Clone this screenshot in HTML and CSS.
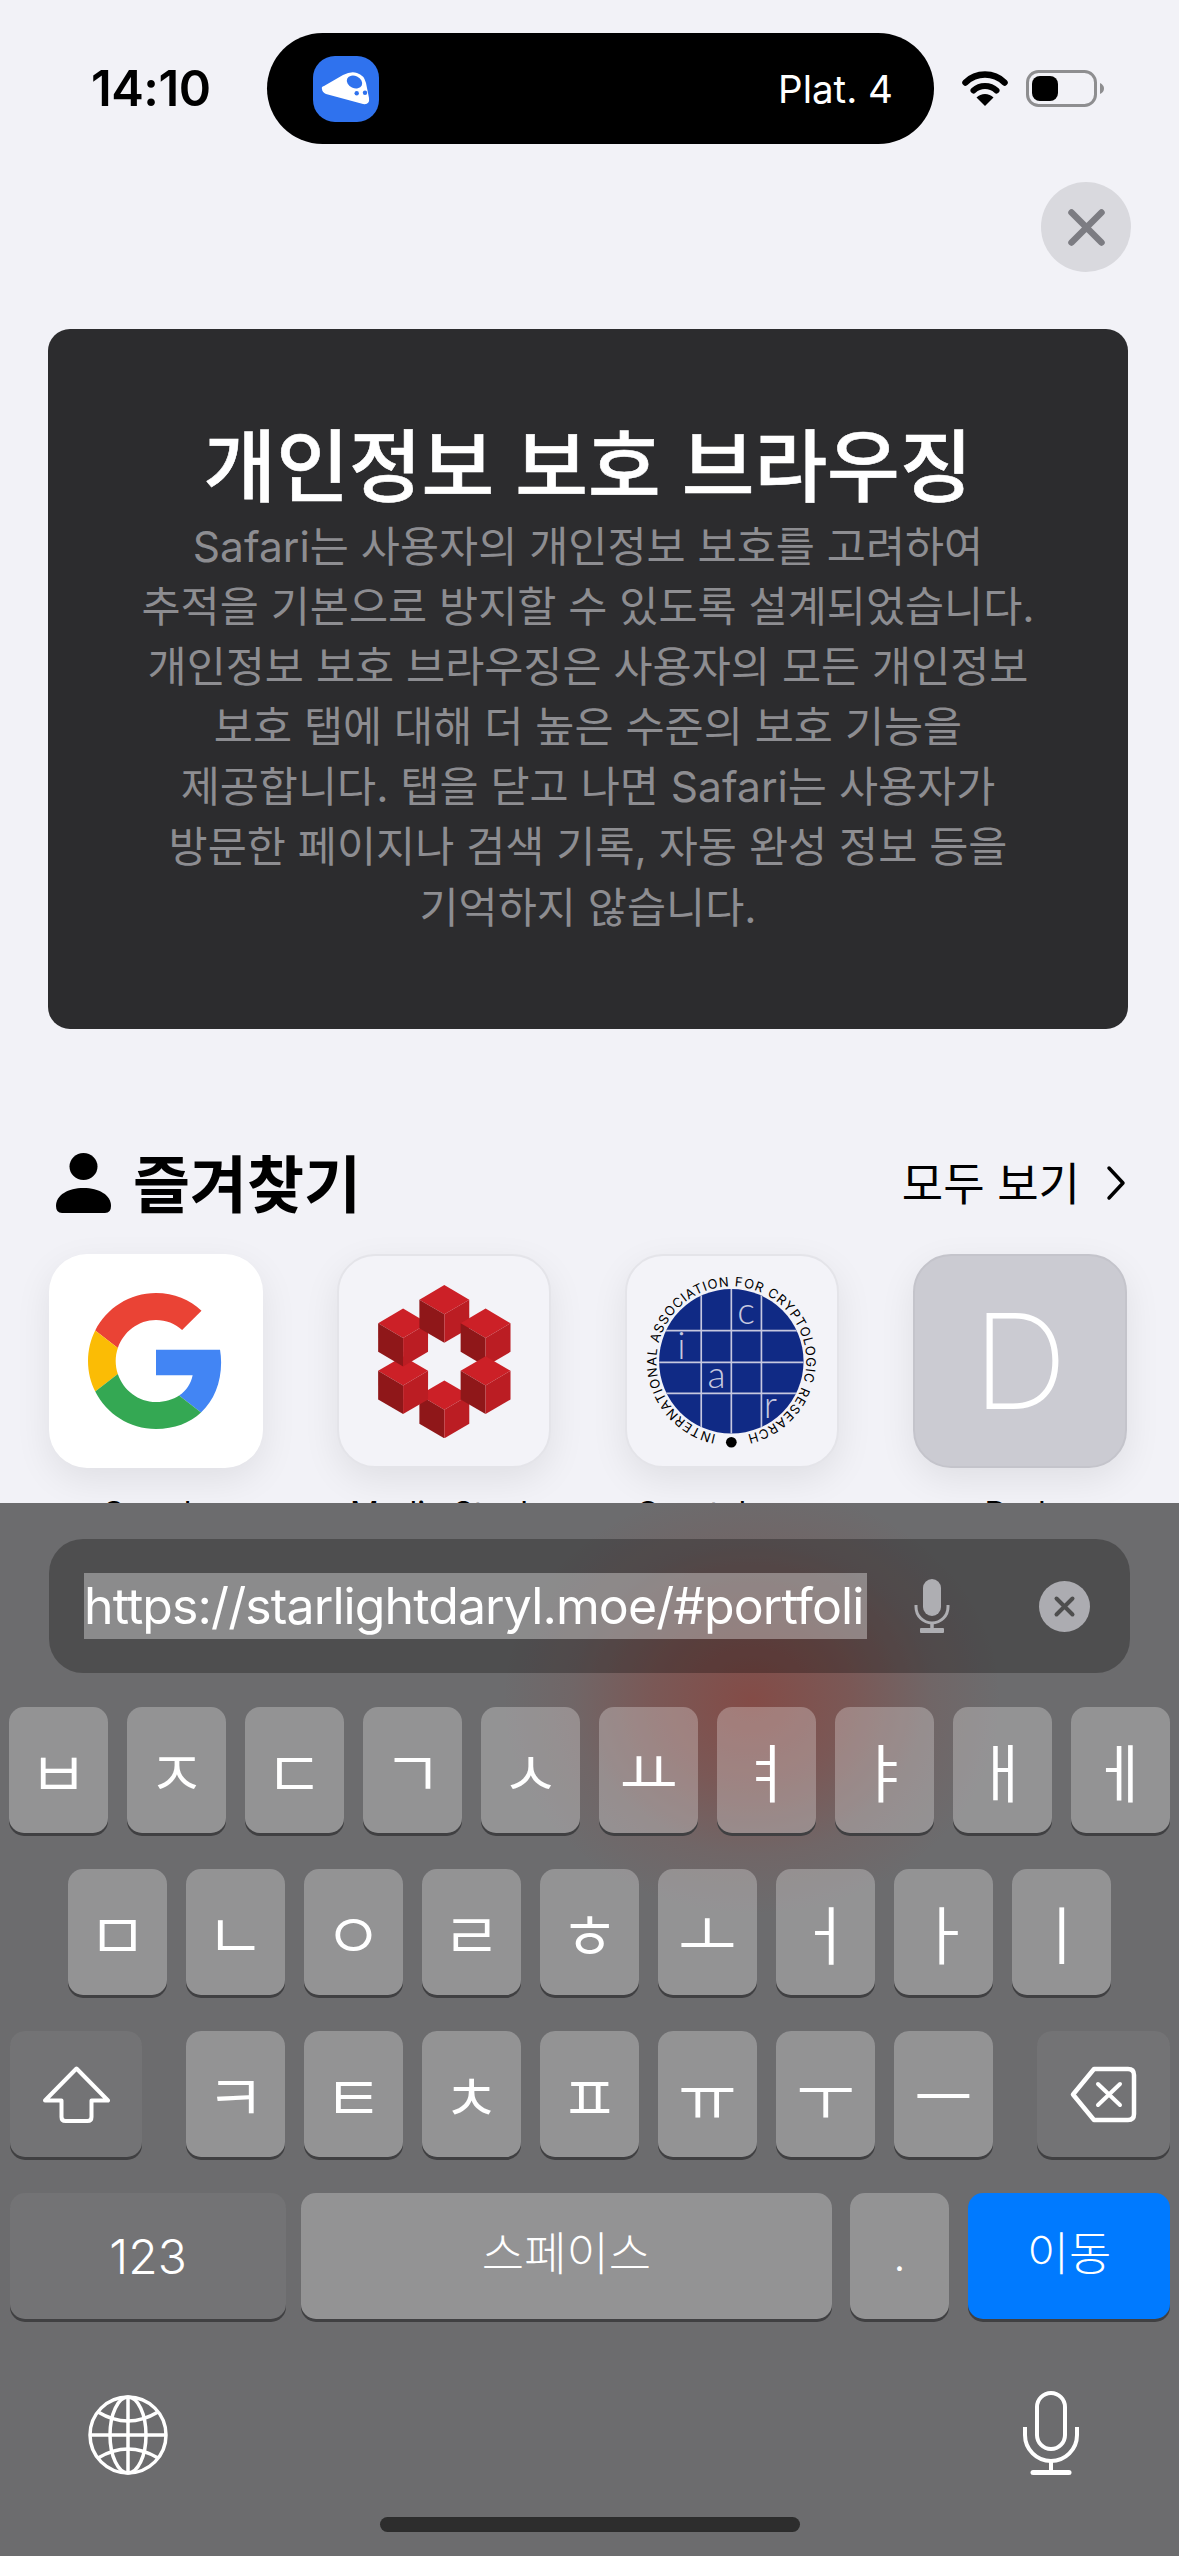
FILE: index.html
```html
<!DOCTYPE html>
<html lang="ko">
<head>
    <meta charset="UTF-8">
    <meta name="viewport" content="width=device-width, initial-scale=1.0">
    <title>개인정보 보호 브라우징</title>
    <link rel="stylesheet" href="styles.css">
</head>
<body>
    <div class="page">
        <div class="status-bar">
            <span class="time">14:10</span>
            <div class="island">
                <svg class="app-icon" viewBox="0 0 66 66">
                    <rect width="66" height="66" rx="22" fill="#2f72ee"/>
                    <path d="M9 33 Q8 31 11 30 L30 19 Q38 15 44 17 Q51 19 53 27 L56 42 Q57 49 50 48 L13 38 Q9 36 9 33 Z" fill="#fff"/>
                    <ellipse cx="41.500" cy="26" rx="8" ry="6" transform="rotate(25 41.500 26)" fill="#2f72ee"/>
                    <circle cx="43.700" cy="37.300" r="2.200" fill="#2f72ee"/>
                    <circle cx="52" cy="36.700" r="2.200" fill="#2f72ee"/>
                </svg>
                <span class="platform">Plat. 4</span>
            </div>
            <svg class="wifi" viewBox="0 0 46 35">
                <path d="M3.500 11.500 A28 28 0 0 1 42.500 11.500" fill="none" stroke="#000" stroke-width="6.500" stroke-linecap="round"/>
                <path d="M11.500 19.500 A17 17 0 0 1 34.500 19.500" fill="none" stroke="#000" stroke-width="6" stroke-linecap="round"/>
                <path d="M23 35 L14.500 26.500 A12 12 0 0 1 31.500 26.500 Z" fill="#000"/>
            </svg>
            <svg class="battery" viewBox="0 0 78 37">
                <rect x="1.500" y="1.500" width="68" height="34" rx="11" fill="none" stroke="#8e8e90" stroke-width="3"/>
                <rect x="6" y="6" width="26" height="25" rx="8" fill="#000"/>
                <path d="M74 13 Q78 15 78 18.500 Q78 22 74 24 Z" fill="#8e8e90"/>
            </svg>
        </div>

        <div class="close-row">
            <div class="close-button">
                <svg viewBox="0 0 37 37" width="37" height="37">
                    <path d="M3.500 3.500 L33.500 33.500 M33.500 3.500 L3.500 33.500" stroke="#7c7c82" stroke-width="6.500" stroke-linecap="round"/>
                </svg>
            </div>
        </div>

        <div class="private-card">
            <h1>개인정보 보호 브라우징</h1>
            <p>Safari는 사용자의 개인정보 보호를 고려하여<br>
            추적을 기본으로 방지할 수 있도록 설계되었습니다.<br>
            개인정보 보호 브라우징은 사용자의 모든 개인정보<br>
            보호 탭에 대해 더 높은 수준의 보호 기능을<br>
            제공합니다. 탭을 닫고 나면 Safari는 사용자가<br>
            방문한 페이지나 검색 기록, 자동 완성 정보 등을<br>
            기억하지 않습니다.</p>
        </div>

        <div class="section-header">
            <div class="section-title">
                <svg class="person" viewBox="0 0 55 60">
                    <ellipse cx="27.500" cy="13.500" rx="14" ry="13.500"/>
                    <path d="M0 53 C0 42 12 35 27.500 35 C43 35 55 42 55 53 Q55 60 49 60 L6 60 Q0 60 0 53 Z"/>
                </svg>
                <h2>즐겨찾기</h2>
            </div>
            <div class="see-all">
                <span>모두 보기</span>
                <svg viewBox="0 0 20 36" width="20" height="36">
                    <path d="M3 3 L17 18 L3 33" fill="none" stroke="#000" stroke-width="3.500" stroke-linecap="round" stroke-linejoin="round"/>
                </svg>
            </div>
        </div>

        <div class="favorites">
            <div class="favorite">
                <div class="tile tile-white">
                    <svg viewBox="0 0 48 48" width="136" height="136">
                        <path fill="#EA4335" d="M24 9.5c3.54 0 6.71 1.22 9.21 3.6l6.85-6.85C35.9 2.38 30.47 0 24 0 14.62 0 6.51 5.38 2.56 13.22l7.98 6.19C12.43 13.72 17.74 9.5 24 9.5z"/>
                        <path fill="#4285F4" d="M46.98 24.55c0-1.57-.15-3.09-.38-4.55H24v9.02h12.94c-.58 2.96-2.26 5.48-4.78 7.18l7.73 6c4.51-4.18 7.09-10.36 7.09-17.65z"/>
                        <path fill="#FBBC05" d="M10.53 28.59c-.48-1.45-.76-2.99-.76-4.59s.27-3.14.76-4.59l-7.98-6.19C.92 16.46 0 20.12 0 24c0 3.88.92 7.54 2.56 10.78l7.97-6.19z"/>
                        <path fill="#34A853" d="M24 48c6.48 0 11.93-2.13 15.89-5.81l-7.73-6c-2.15 1.45-4.92 2.3-8.16 2.3-6.26 0-11.57-4.22-13.47-9.91l-7.98 6.19C6.51 42.62 14.62 48 24 48z"/>
                    </svg>
                </div>
                <span class="label">Google</span>
            </div>
            <div class="favorite">
                <div class="tile tile-light">
                    <svg viewBox="232 158 399 460" width="133" height="153">
                        <defs>
                            <g id="cube">
                                <path d="M0 -87 L75 -43 L0 1 L-75 -43 Z" fill="#cc2027"/>
                                <path d="M-75 -43 L0 1 L0 87 L-75 43 Z" fill="#8f1719"/>
                                <path d="M75 -43 L0 1 L0 87 L75 43 Z" fill="#bb1d23"/>
                            </g>
                        </defs>
                        <use href="#cube" x="431" y="532"/>
                        <use href="#cube" x="307" y="459"/>
                        <use href="#cube" x="307" y="316"/>
                        <use href="#cube" x="431" y="245"/>
                        <use href="#cube" x="555" y="316"/>
                        <use href="#cube" x="555" y="459"/>
                    </svg>
                </div>
                <span class="label">Marlin Stack</span>
            </div>
            <div class="favorite">
                <div class="tile tile-light">
                    <svg class="iacr" viewBox="78 72 640 640" width="214" height="214">
                        <defs>
                            <clipPath id="seal"><circle cx="396" cy="393" r="216"/></clipPath>
                        </defs>
                        <circle cx="396" cy="393" r="216" fill="#102a85"/>
                        <g clip-path="url(#seal)" stroke="#c6c8df" stroke-width="5">
                            <path d="M306 170 V620 M396 170 V620 M486 170 V620 M170 301 H620 M170 396 H620 M170 489 H620" fill="none"/>
                        </g>
                        <g class="iacr-letters">
                            <text x="440" y="282">c</text>
                            <text x="247" y="385">i</text>
                            <text x="352" y="472">a</text>
                            <text x="513" y="562">r</text>
                        </g>
                        <path id="seal-ring" d="M350 612 A224 224 0 1 1 442 612" fill="none"/>
                        <text class="iacr-ring"><textPath href="#seal-ring" textLength="1312">INTERNATIONAL ASSOCIATION FOR CRYPTOLOGIC RESEARCH</textPath></text>
                        <circle cx="396" cy="635" r="16" fill="#000"/>
                    </svg>
                </div>
                <span class="label">Cryptology…</span>
            </div>
            <div class="favorite">
                <div class="tile tile-letter">D</div>
                <span class="label">Dark</span>
            </div>
        </div>
    </div>

    <div class="keyboard">
        <div class="url-bar">
            <span class="url">https://starlightdaryl.moe/#portfoli</span>
            <svg class="url-mic" viewBox="0 0 36 54">
                <rect x="9" y="0" width="18" height="37" rx="9" fill="#aeaeb2"/>
                <path d="M2 26 V28 A16 16 0 0 0 34 28 V26" fill="none" stroke="#aeaeb2" stroke-width="3"/>
                <path d="M18 44 V51" stroke="#aeaeb2" stroke-width="3.500"/>
                <rect x="6" y="49" width="24" height="5" rx="1" fill="#aeaeb2"/>
            </svg>
            <svg class="url-clear" viewBox="0 0 51 51">
                <circle cx="25.500" cy="25.500" r="25.500" fill="#acacb1"/>
                <path d="M17.500 17.500 L33.500 33.500 M33.500 17.500 L17.500 33.500" stroke="#4e4e4e" stroke-width="4" stroke-linecap="round"/>
            </svg>
        </div>

        <div class="keys">
            <div class="row">
                <div class="key">ㅂ</div>
                <div class="key">ㅈ</div>
                <div class="key">ㄷ</div>
                <div class="key">ㄱ</div>
                <div class="key">ㅅ</div>
                <div class="key">ㅛ</div>
                <div class="key">ㅕ</div>
                <div class="key">ㅑ</div>
                <div class="key">ㅐ</div>
                <div class="key">ㅔ</div>
            </div>
            <div class="row">
                <div class="key">ㅁ</div>
                <div class="key">ㄴ</div>
                <div class="key">ㅇ</div>
                <div class="key">ㄹ</div>
                <div class="key">ㅎ</div>
                <div class="key">ㅗ</div>
                <div class="key">ㅓ</div>
                <div class="key">ㅏ</div>
                <div class="key">ㅣ</div>
            </div>
            <div class="row row-split">
                <div class="key key-dark key-shift">
                    <svg viewBox="0 0 67 57" width="67" height="57">
                        <path d="M33.500 2.500 L65 34.500 H48.500 V51 Q48.500 55 44.500 55 H22.500 Q18.500 55 18.500 51 V34.500 H2 Z" fill="none" stroke="#fff" stroke-width="4" stroke-linejoin="round"/>
                    </svg>
                </div>
                <div class="row">
                    <div class="key">ㅋ</div>
                    <div class="key">ㅌ</div>
                    <div class="key">ㅊ</div>
                    <div class="key">ㅍ</div>
                    <div class="key">ㅠ</div>
                    <div class="key">ㅜ</div>
                    <div class="key">ㅡ</div>
                </div>
                <div class="key key-dark key-delete">
                    <svg viewBox="0 0 67 57" width="67" height="57">
                        <path d="M24 3 H58 Q64 3 64 9 V48 Q64 54 58 54 H24 L3 28.500 Z" fill="none" stroke="#fff" stroke-width="4.500" stroke-linejoin="round"/>
                        <path d="M28 18 L50 39 M50 18 L28 39" stroke="#fff" stroke-width="4" stroke-linecap="round"/>
                    </svg>
                </div>
            </div>
            <div class="row row-bottom">
                <div class="key key-dark key-123">123</div>
                <div class="key key-space">스페이스</div>
                <div class="key key-dot">.</div>
                <div class="key key-go">이동</div>
            </div>
        </div>

        <div class="keyboard-footer">
            <svg viewBox="0 0 80 80" width="80" height="80" fill="none" stroke="#fff" stroke-width="3.500">
                <circle cx="40" cy="40" r="38"/>
                <ellipse cx="40" cy="40" rx="18" ry="38"/>
                <path d="M40 2 V78 M2 40 H78"/>
                <path d="M10 17 Q40 35 70 17 M10 63 Q40 45 70 63"/>
            </svg>
            <svg viewBox="0 0 56 84" width="56" height="84" fill="none" stroke="#fff" stroke-width="4">
                <rect x="14" y="2" width="28" height="56" rx="14"/>
                <path d="M2 36 V44 A26 26 0 0 0 54 44 V36"/>
                <path d="M28 70 V80"/>
                <path d="M10 81.500 H46" stroke-width="5" stroke-linecap="round"/>
            </svg>
        </div>
        <div class="home-indicator"></div>
    </div>
</body>
</html>
```

FILE: styles.css
```css
* {
    box-sizing: border-box;
}
html, body {
    margin: 0;
    padding: 0;
}
body {
    width: 1179px;
    height: 2556px;
    overflow: hidden;
    background-color: #f2f2f7;
    color: #000;
    font-family: Inter, "Noto Sans CJK KR", sans-serif;
}
svg {
    display: block;
    flex-shrink: 0;
}

/* top part, cut off by the keyboard */
.page {
    height: 1503px;
    padding-top: 33px;
    overflow: hidden;
}
.status-bar {
    display: flex;
    align-items: center;
    height: 111px;
    padding-left: 91px;
}
.time {
    width: 176px;
    font-size: 49px;
    font-weight: 600;
    letter-spacing: -0.5px;
}
.island {
    display: flex;
    align-items: center;
    justify-content: space-between;
    width: 667px;
    height: 111px;
    padding: 0 41px 0 46px;
    background-color: #000;
    border-radius: 56px;
}
.app-icon {
    width: 66px;
    height: 66px;
}
.platform {
    color: #fff;
    font-size: 38.500px;
}
.wifi {
    width: 46px;
    height: 35px;
    margin-left: 28px;
}
.battery {
    width: 78px;
    height: 37px;
    margin-left: 18px;
}
.close-row {
    display: flex;
    justify-content: flex-end;
    margin-top: 38px;
    padding-right: 48px;
}
.close-button {
    display: flex;
    align-items: center;
    justify-content: center;
    width: 90px;
    height: 90px;
    background-color: #d9d9de;
    border-radius: 50%;
}
.private-card {
    width: 1080px;
    height: 700px;
    margin: 57px 0 0 48px;
    padding-top: 94px;
    background-color: #2c2c2e;
    border-radius: 22px;
    text-align: center;
    white-space: nowrap;
}
.private-card h1 {
    margin: 0 0 6px;
    color: #fff;
    font-size: 79px;
    font-weight: 500;
    line-height: 88px;
    -webkit-text-stroke: 0.600px #fff;
}
.private-card p {
    margin: 0;
    color: #8d8d91;
    font-size: 42.500px;
    line-height: 60.100px;
}
.section-header {
    display: flex;
    align-items: center;
    justify-content: space-between;
    height: 60px;
    margin-top: 124px;
    padding: 0 53px 0 56px;
}
.section-title {
    display: flex;
    align-items: center;
    gap: 22px;
}
.person {
    width: 55px;
    height: 60px;
}
.section-title h2 {
    margin: 0 0 5px;
    font-size: 62px;
    font-weight: 700;
}
.see-all {
    display: flex;
    align-items: center;
    gap: 26px;
    font-size: 45px;
}
.see-all span {
    margin-bottom: 4px;
}
.favorites {
    display: flex;
    gap: 74px;
    margin-top: 41px;
    padding-left: 49px;
}
.favorite {
    display: flex;
    flex-direction: column;
    align-items: center;
    width: 214px;
}
.tile {
    display: flex;
    align-items: center;
    justify-content: center;
    width: 214px;
    height: 214px;
    border-radius: 38px;
    box-shadow: 0 12px 36px rgba(0, 0, 0, 0.08);
}
.tile-white {
    background-color: #fff;
}
.tile-light {
    background-color: #f3f3f8;
    border: 2px solid #e4e4e9;
}
.iacr {
    margin: -2px;
}
.iacr-letters text {
    fill: #c6c8df;
    font-family: Lato, sans-serif;
    font-size: 112px;
    font-weight: 300;
    text-anchor: middle;
}
.iacr-ring {
    font-family: Inter, sans-serif;
    font-size: 39px;
}
.tile-letter {
    background-color: #cbcbd2;
    border: 2px solid #c4c4cb;
    color: #fff;
    font-size: 132px;
    font-weight: 250;
}
.label {
    margin-top: 26px;
    font-size: 32px;
    line-height: 40px;
    white-space: nowrap;
}

/* keyboard */
.keyboard {
    height: 1053px;
    padding-top: 36px;
    overflow: hidden;
    background-color: #6c6c6e;
    background-image: radial-gradient(ellipse 250px 215px at 752px 197px, rgba(150, 50, 40, 0.56) 0%, rgba(150, 50, 40, 0.34) 40%, rgba(150, 50, 40, 0.1) 72%, rgba(150, 50, 40, 0) 100%);
    background-repeat: no-repeat;
    color: #fff;
}
.url-bar {
    display: flex;
    align-items: center;
    width: 1081px;
    height: 134px;
    margin-left: 49px;
    padding-left: 35px;
    background-color: rgba(0, 0, 0, 0.28);
    border-radius: 34px;
}
.url {
    width: 783px;
    height: 66px;
    overflow: hidden;
    background-color: rgba(255, 255, 255, 0.35);
    font-size: 50px;
    letter-spacing: -0.900px;
    line-height: 66px;
    white-space: nowrap;
}
.url-mic {
    width: 36px;
    height: 54px;
    margin-left: 47px;
}
.url-clear {
    width: 51px;
    height: 51px;
    margin-left: 89px;
}
.keys {
    display: flex;
    flex-direction: column;
    gap: 36px;
    margin-top: 34px;
}
.row {
    display: flex;
    justify-content: center;
    gap: 19px;
}
.row-split {
    justify-content: space-between;
    padding: 0 9px 0 10px;
}
.row-bottom {
    justify-content: flex-start;
    gap: 15px;
    padding-left: 10px;
}
.key {
    display: flex;
    align-items: center;
    justify-content: center;
    width: 99px;
    height: 126px;
    padding-bottom: 3px;
    background-color: rgba(255, 255, 255, 0.265);
    border-radius: 15px;
    box-shadow: 0 3px 0 #404042;
    font-size: 64px;
    font-weight: 350;
}
.key-dark {
    background-color: rgba(255, 255, 255, 0.05);
}
.key-shift {
    width: 132px;
    padding-bottom: 0;
}
.key-delete {
    width: 133px;
    padding-bottom: 0;
}
.key-123 {
    width: 276px;
    padding-bottom: 0;
    font-size: 48px;
    font-weight: 300;
}
.key-space {
    width: 531px;
    padding-bottom: 12px;
    font-size: 46px;
    font-weight: 300;
}
.key-dot {
    margin: 0 4px 0 3px;
    font-size: 44px;
}
.key-go {
    width: 202px;
    padding-bottom: 12px;
    background-color: #007aff;
    font-size: 46px;
    font-weight: 300;
}
.keyboard-footer {
    display: flex;
    align-items: flex-end;
    justify-content: space-between;
    height: 84px;
    margin-top: 72px;
    padding: 0 100px 0 88px;
}
.home-indicator {
    width: 420px;
    height: 15px;
    margin: 42px auto 0;
    background-color: #2d2d2d;
    border-radius: 8px;
}
```
